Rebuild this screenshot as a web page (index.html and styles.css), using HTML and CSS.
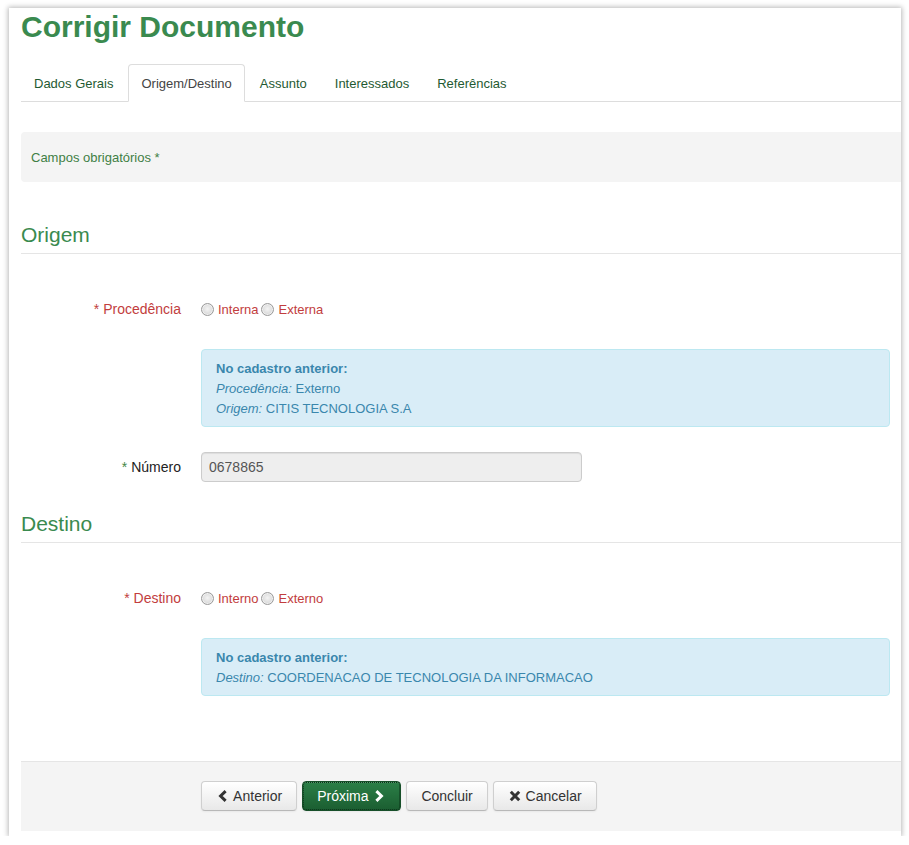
FILE: index.html
```html
<!DOCTYPE html>
<html lang="pt">
<head>
<meta charset="utf-8">
<title>Corrigir Documento</title>
<link rel="stylesheet" href="styles.css">
</head>
<body>
<div class="panel">
  <h1 class="title">Corrigir Documento</h1>
  <ul class="tabs">
    <li><a>Dados Gerais</a></li>
    <li class="active"><a>Origem/Destino</a></li>
    <li><a>Assunto</a></li>
    <li><a>Interessados</a></li>
    <li><a>Referências</a></li>
  </ul>
  <div class="well">Campos obrigatórios *</div>

  <div class="legend legend-first">Origem</div>
  <div class="group">
    <div class="label error">* Procedência</div>
    <div class="controls">
      <div class="radios error">
        <label class="radio"><input type="radio" name="proc">Interna</label>
        <label class="radio"><input type="radio" name="proc">Externa</label>
      </div>
      <div class="alert">
        <div class="alert-title">No cadastro anterior:</div>
        <div><em>Procedência:</em> Externo</div>
        <div><em>Origem:</em> CITIS TECNOLOGIA S.A</div>
      </div>
    </div>
  </div>
  <div class="group">
    <div class="label label-input"><span class="req">*</span> Número</div>
    <div class="controls">
      <input class="input" type="text" value="0678865" readonly>
    </div>
  </div>

  <div class="legend legend-second">Destino</div>
  <div class="group">
    <div class="label error">* Destino</div>
    <div class="controls">
      <div class="radios error">
        <label class="radio"><input type="radio" name="dest">Interno</label>
        <label class="radio"><input type="radio" name="dest">Externo</label>
      </div>
      <div class="alert">
        <div class="alert-title">No cadastro anterior:</div>
        <div><em>Destino:</em> COORDENACAO DE TECNOLOGIA DA INFORMACAO</div>
      </div>
    </div>
  </div>

  <div class="actions">
    <button class="btn" type="button"><svg class="icon" viewBox="0 0 14 14"><path d="M9.6 2.2 L4.6 7 L9.6 11.8" fill="none" stroke="#333" stroke-width="3"/></svg> Anterior</button>
    <button class="btn btn-success" type="button">Próxima <svg class="icon" viewBox="0 0 14 14"><path d="M4.4 2.2 L9.4 7 L4.4 11.8" fill="none" stroke="#fff" stroke-width="3"/></svg></button>
    <button class="btn" type="button">Concluir</button>
    <button class="btn" type="button"><svg class="icon" viewBox="0 0 14 14"><path d="M2.8 2.8 L11.2 11.2 M11.2 2.8 L2.8 11.2" fill="none" stroke="#333" stroke-width="3"/></svg> Cancelar</button>
  </div>
</div>
</body>
</html>
```

FILE: styles.css
```css
* { box-sizing: border-box; }

html, body {
  margin: 0;
  padding: 0;
  background: #fff;
}

body {
  font-family: "Liberation Sans", Arial, Helvetica, sans-serif;
  font-size: 14px;
  line-height: 20px;
  color: #333;
}

.panel {
  margin: 8px 0 0 9px;
  width: 892px;
  padding: 4px 0 5px 12px;
  background: #fff;
  box-shadow: 0 0 5px 1px rgba(0, 0, 0, 0.28);
}

.title {
  margin: 0;
  font-size: 30px;
  line-height: 30px;
  font-weight: bold;
  color: #3a8a4f;
}

.tabs {
  list-style: none;
  margin: 22px 0 0 0;
  padding: 0;
  display: flex;
  border-bottom: 1px solid #ddd;
}

.tabs li {
  margin: 0 2px -1px 0;
}

.tabs a {
  display: block;
  padding: 9px 12px 7px;
  font-size: 13px;
  line-height: 20px;
  color: #1f5a32;
  border: 1px solid transparent;
  border-radius: 4px 4px 0 0;
}

.tabs .active a {
  color: #444;
  background: #fff;
  border-color: #ddd #ddd transparent #ddd;
}

.well {
  margin-top: 30px;
  padding: 16px 10px 14px;
  background: #f4f4f4;
  border-radius: 4px 0 0 4px;
  font-size: 13px;
  line-height: 20px;
  color: #3f7f45;
}

.legend {
  height: 41px;
  padding-top: 4px;
  font-size: 21px;
  line-height: 36px;
  color: #3a8a4f;
  border-bottom: 1px solid #e5e5e5;
  margin-bottom: 39px;
}

.legend-first { margin-top: 31px; }
.legend-second { margin-top: 20px; }

.group {
  display: flex;
}

.group + .group {
  margin-top: 25px;
}

.label {
  width: 160px;
  flex: none;
  text-align: right;
  padding-top: 5px;
  line-height: 20px;
  font-size: 14px;
}

.label.error {
  padding-top: 6px;
}

.label-input {
  color: #222;
}

.req {
  color: #468847;
}

.error {
  color: #c23d3d;
}

.controls {
  margin-left: 20px;
  flex: 1;
}

.radios {
  display: flex;
  align-items: center;
  padding-top: 8px;
  height: 25px;
  line-height: 17px;
  font-size: 13px;
}

.radio {
  display: inline-flex;
  align-items: center;
  margin-right: 3px;
}

.radio input {
  -webkit-appearance: none;
  appearance: none;
  width: 13px;
  height: 13px;
  margin: 0 4px 0 0;
  border-radius: 50%;
  border: 1px solid #9a9a9a;
  background: radial-gradient(circle at 50% 45%, #f4f4f4 0, #e2e2e2 45%, #c9c9c9 100%);
  box-shadow: inset 0 0 0 1px rgba(255, 255, 255, 0.6);
}

.alert {
  margin: 31px 11px 0 0;
  padding: 9px 14px 7px;
  background: #d9edf7;
  border: 1px solid #bce8f1;
  border-radius: 4px;
  color: #3a87ad;
  font-size: 13px;
  line-height: 20px;
}

.alert-title {
  font-weight: bold;
}

.input {
  display: block;
  width: 381px;
  height: 30px;
  padding: 4px 7px;
  font-family: "Liberation Sans", Arial, sans-serif;
  font-size: 14px;
  line-height: 20px;
  color: #555;
  background: #eee;
  border: 1px solid #ccc;
  border-radius: 4px;
  box-shadow: inset 0 1px 1px rgba(0, 0, 0, 0.075);
  outline: none;
}

.actions {
  margin-top: 65px;
  padding: 19px 20px 20px 180px;
  background: #f4f4f4;
  border-top: 1px solid #e5e5e5;
  display: flex;
  gap: 5px;
}

.btn {
  display: inline-flex;
  align-items: center;
  height: 30px;
  padding: 4px 14px;
  font-family: "Liberation Sans", Arial, sans-serif;
  font-size: 14px;
  line-height: 20px;
  color: #333;
  white-space: pre;
  background: linear-gradient(#ffffff, #e8e8e8);
  border: 1px solid #cfcfcf;
  border-bottom-color: #b8b8b8;
  border-radius: 4px;
  box-shadow: inset 0 1px 0 rgba(255, 255, 255, 0.2), 0 1px 2px rgba(0, 0, 0, 0.05);
}

.btn-success {
  color: #fff;
  background: linear-gradient(#2b7f47, #1b5e31);
  border-color: #174f29;
  outline: 1px dotted #0b3318;
  outline-offset: -2px;
}

.icon {
  width: 14px;
  height: 14px;
  flex: none;
}
```
